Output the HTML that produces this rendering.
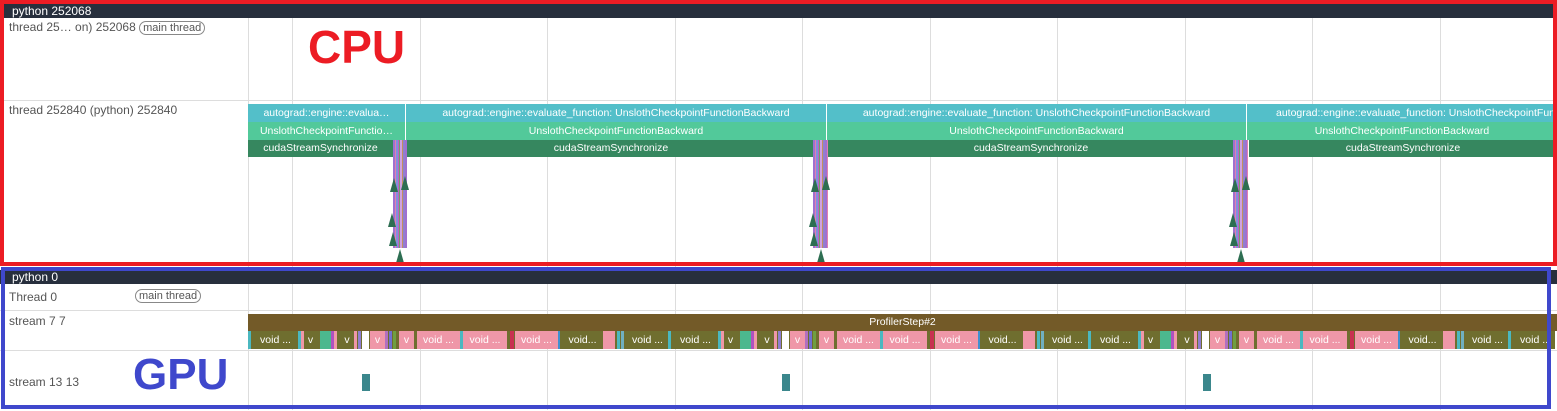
<!DOCTYPE html>
<html><head><meta charset="utf-8"><style>
*{margin:0;padding:0;box-sizing:border-box}
body{width:1557px;height:411px;background:#fff;position:relative;overflow:hidden;font-family:"Liberation Sans",sans-serif}
.a{position:absolute}
.hd{background:#272f3d;color:#fff;font-size:12px;line-height:14px;padding-left:12px}
.lbl{color:#555;font-size:12px}
.pill{border:1px solid #888;border-radius:8px;padding:0 3px;font-size:11px;color:#555}
.vl{position:absolute;width:1px;background:#ddd}
.hl{position:absolute;height:1px;background:#ddd;left:0;width:1557px}
.s{position:absolute;color:#fff;font-size:10.5px;text-align:center;overflow:hidden;white-space:nowrap}
.k{position:absolute;top:0;height:18px;color:#fff;font-size:10.5px;line-height:18px;text-align:center;overflow:hidden;white-space:nowrap}
.kr{position:absolute;left:248px;top:331px;width:1307px;height:18px;background:#6f6e2f;overflow:hidden}
.tri{position:absolute;width:0;height:0;border-left:4px solid transparent;border-right:4px solid transparent;border-bottom:14px solid #2d6e52}
.sp{position:absolute;background:repeating-linear-gradient(90deg,#a070d0 0 2px,#e080b0 2px 3px,#8090e0 3px 5px,#c060c0 5px 6px,#70a070 6px 7px,#d0a0e0 7px 9px,#c09060 9px 10px,#9080d0 10px 12px)}
</style></head><body>
<div class="vl" style="left:248px;top:18px;height:392px"></div>
<div class="vl" style="left:292px;top:18px;height:392px"></div>
<div class="vl" style="left:420px;top:18px;height:392px"></div>
<div class="vl" style="left:547px;top:18px;height:392px"></div>
<div class="vl" style="left:675px;top:18px;height:392px"></div>
<div class="vl" style="left:802px;top:18px;height:392px"></div>
<div class="vl" style="left:930px;top:18px;height:392px"></div>
<div class="vl" style="left:1057px;top:18px;height:392px"></div>
<div class="vl" style="left:1185px;top:18px;height:392px"></div>
<div class="vl" style="left:1312px;top:18px;height:392px"></div>
<div class="vl" style="left:1440px;top:18px;height:392px"></div>
<div class="hl" style="top:100px"></div>
<div class="hl" style="top:310px"></div>
<div class="hl" style="top:350px"></div>

<div class="a hd" style="left:0;top:4px;width:1557px;height:14px">python 252068</div>
<div class="a lbl" style="left:9px;top:20px">thread 25… on) 252068 <span class="pill">main thread</span></div>
<div class="a lbl" style="left:9px;top:103px">thread 252840 (python) 252840</div>
<div class="a" style="left:308px;top:20px;color:#ec1c24;font-size:46px;font-weight:bold">CPU</div>

<div class="s" style="left:248px;top:104px;width:157px;height:18px;line-height:18px;background:#53bfc9">autograd::engine::evalua…</div>
<div class="s" style="left:406px;top:104px;width:420px;height:18px;line-height:18px;background:#53bfc9">autograd::engine::evaluate_function: UnslothCheckpointFunctionBackward</div>
<div class="s" style="left:827px;top:104px;width:419px;height:18px;line-height:18px;background:#53bfc9">autograd::engine::evaluate_function: UnslothCheckpointFunctionBackward</div>
<div class="s" style="left:1247px;top:104px;width:310px;height:18px;line-height:18px;background:#53bfc9;text-align:left;padding-left:29px">autograd::engine::evaluate_function: UnslothCheckpointFunctionBackward</div>
<div class="s" style="left:248px;top:122px;width:157px;height:18px;line-height:18px;background:#52c99a">UnslothCheckpointFunctio…</div>
<div class="s" style="left:406px;top:122px;width:420px;height:18px;line-height:18px;background:#52c99a">UnslothCheckpointFunctionBackward</div>
<div class="s" style="left:827px;top:122px;width:419px;height:18px;line-height:18px;background:#52c99a">UnslothCheckpointFunctionBackward</div>
<div class="s" style="left:1247px;top:122px;width:310px;height:18px;line-height:18px;background:#52c99a">UnslothCheckpointFunctionBackward</div>
<div class="s" style="left:248px;top:140px;width:145px;height:17px;line-height:17px;background:#36875f">cudaStreamSynchronize</div>
<div class="s" style="left:407px;top:140px;width:408px;height:17px;line-height:17px;background:#36875f">cudaStreamSynchronize</div>
<div class="s" style="left:828px;top:140px;width:406px;height:17px;line-height:17px;background:#36875f">cudaStreamSynchronize</div>
<div class="s" style="left:1249px;top:140px;width:308px;height:17px;line-height:17px;background:#36875f">cudaStreamSynchronize</div>

<div class="sp" style="left:393px;top:140px;width:14px;height:108px"></div>
<div class="sp" style="left:813px;top:140px;width:15px;height:108px"></div>
<div class="sp" style="left:1233px;top:140px;width:15px;height:108px"></div>
<div class="tri" style="left:390px;top:178px"></div><div class="tri" style="left:401px;top:176px"></div>
<div class="tri" style="left:388px;top:213px"></div><div class="tri" style="left:389px;top:232px"></div><div class="tri" style="left:396px;top:249px"></div>
<div class="tri" style="left:811px;top:178px"></div><div class="tri" style="left:822px;top:176px"></div>
<div class="tri" style="left:809px;top:213px"></div><div class="tri" style="left:810px;top:232px"></div><div class="tri" style="left:817px;top:249px"></div>
<div class="tri" style="left:1231px;top:178px"></div><div class="tri" style="left:1242px;top:176px"></div>
<div class="tri" style="left:1229px;top:213px"></div><div class="tri" style="left:1230px;top:232px"></div><div class="tri" style="left:1237px;top:249px"></div>

<div class="a hd" style="left:0;top:270px;width:1557px;height:14px">python 0</div>
<div class="a lbl" style="left:9px;top:290px">Thread 0</div>
<div class="a pill" style="left:135px;top:289px">main thread</div>
<div class="a lbl" style="left:9px;top:314px">stream 7 7</div>
<div class="a lbl" style="left:9px;top:375px">stream 13 13</div>
<div class="a" style="left:133px;top:350px;color:#3f48cc;font-size:44px;font-weight:bold">GPU</div>

<div class="s" style="left:248px;top:314px;width:1309px;height:17px;line-height:17px;background:#735a28">ProfilerStep#2</div>
<div class="kr">
<div class="a" style="left:0;top:0;width:1307px;height:18px">
<div class="k" style="left:0;width:3px;background:#4bb8c0"></div><div class="k" style="left:5px;width:45px;background:#6f6e2f">void ...</div><div class="k" style="left:50px;width:3px;background:#4bb8c0"></div><div class="k" style="left:53px;width:3px;background:#ef97a8"></div><div class="k" style="left:56px;width:13px;background:#6f6e2f">v</div><div class="k" style="left:72px;width:11px;background:#4cb88e"></div><div class="k" style="left:83px;width:3px;background:#b050c0"></div><div class="k" style="left:86px;width:3px;background:#ef97a8"></div><div class="k" style="left:92px;width:14px;background:#6f6e2f">v</div><div class="k" style="left:106px;width:3px;background:#ef97a8"></div><div class="k" style="left:110px;width:3px;background:#8f7fd0"></div><div class="k" style="left:114px;width:7px;background:#fff"></div><div class="k" style="left:122px;width:15px;background:#ef97a8">v</div><div class="k" style="left:137px;width:3px;background:#b070c0"></div><div class="k" style="left:141px;width:3px;background:#7070d0"></div><div class="k" style="left:145px;width:3px;background:#6f9f40"></div><div class="k" style="left:151px;width:15px;background:#ef97a8">v</div><div class="k" style="left:169px;width:43px;background:#ef97a8">void ...</div><div class="k" style="left:212px;width:3px;background:#4bb8c0"></div><div class="k" style="left:215px;width:44px;background:#ef97a8">void ...</div><div class="k" style="left:262px;width:4px;background:#c83050"></div><div class="k" style="left:267px;width:43px;background:#ef97a8">void ...</div><div class="k" style="left:310px;width:2px;background:#4090d0"></div><div class="k" style="left:314px;width:41px;background:#6f6e2f">void...</div><div class="k" style="left:355px;width:12px;background:#ef97a8"></div><div class="k" style="left:369px;width:3px;background:#4bb8c0"></div><div class="k" style="left:373px;width:3px;background:#70b0c0"></div><div class="k" style="left:379px;width:41px;background:#6f6e2f">void ...</div>
</div>
<div class="a" style="left:420px;top:0;width:900px;height:18px">
<div class="k" style="left:0;width:3px;background:#4bb8c0"></div><div class="k" style="left:5px;width:45px;background:#6f6e2f">void ...</div><div class="k" style="left:50px;width:3px;background:#4bb8c0"></div><div class="k" style="left:53px;width:3px;background:#ef97a8"></div><div class="k" style="left:56px;width:13px;background:#6f6e2f">v</div><div class="k" style="left:72px;width:11px;background:#4cb88e"></div><div class="k" style="left:83px;width:3px;background:#b050c0"></div><div class="k" style="left:86px;width:3px;background:#ef97a8"></div><div class="k" style="left:92px;width:14px;background:#6f6e2f">v</div><div class="k" style="left:106px;width:3px;background:#ef97a8"></div><div class="k" style="left:110px;width:3px;background:#8f7fd0"></div><div class="k" style="left:114px;width:7px;background:#fff"></div><div class="k" style="left:122px;width:15px;background:#ef97a8">v</div><div class="k" style="left:137px;width:3px;background:#b070c0"></div><div class="k" style="left:141px;width:3px;background:#7070d0"></div><div class="k" style="left:145px;width:3px;background:#6f9f40"></div><div class="k" style="left:151px;width:15px;background:#ef97a8">v</div><div class="k" style="left:169px;width:43px;background:#ef97a8">void ...</div><div class="k" style="left:212px;width:3px;background:#4bb8c0"></div><div class="k" style="left:215px;width:44px;background:#ef97a8">void ...</div><div class="k" style="left:262px;width:4px;background:#c83050"></div><div class="k" style="left:267px;width:43px;background:#ef97a8">void ...</div><div class="k" style="left:310px;width:2px;background:#4090d0"></div><div class="k" style="left:314px;width:41px;background:#6f6e2f">void...</div><div class="k" style="left:355px;width:12px;background:#ef97a8"></div><div class="k" style="left:369px;width:3px;background:#4bb8c0"></div><div class="k" style="left:373px;width:3px;background:#70b0c0"></div><div class="k" style="left:379px;width:41px;background:#6f6e2f">void ...</div>
</div>
<div class="a" style="left:840px;top:0;width:900px;height:18px">
<div class="k" style="left:0;width:3px;background:#4bb8c0"></div><div class="k" style="left:5px;width:45px;background:#6f6e2f">void ...</div><div class="k" style="left:50px;width:3px;background:#4bb8c0"></div><div class="k" style="left:53px;width:3px;background:#ef97a8"></div><div class="k" style="left:56px;width:13px;background:#6f6e2f">v</div><div class="k" style="left:72px;width:11px;background:#4cb88e"></div><div class="k" style="left:83px;width:3px;background:#b050c0"></div><div class="k" style="left:86px;width:3px;background:#ef97a8"></div><div class="k" style="left:92px;width:14px;background:#6f6e2f">v</div><div class="k" style="left:106px;width:3px;background:#ef97a8"></div><div class="k" style="left:110px;width:3px;background:#8f7fd0"></div><div class="k" style="left:114px;width:7px;background:#fff"></div><div class="k" style="left:122px;width:15px;background:#ef97a8">v</div><div class="k" style="left:137px;width:3px;background:#b070c0"></div><div class="k" style="left:141px;width:3px;background:#7070d0"></div><div class="k" style="left:145px;width:3px;background:#6f9f40"></div><div class="k" style="left:151px;width:15px;background:#ef97a8">v</div><div class="k" style="left:169px;width:43px;background:#ef97a8">void ...</div><div class="k" style="left:212px;width:3px;background:#4bb8c0"></div><div class="k" style="left:215px;width:44px;background:#ef97a8">void ...</div><div class="k" style="left:262px;width:4px;background:#c83050"></div><div class="k" style="left:267px;width:43px;background:#ef97a8">void ...</div><div class="k" style="left:310px;width:2px;background:#4090d0"></div><div class="k" style="left:314px;width:41px;background:#6f6e2f">void...</div><div class="k" style="left:355px;width:12px;background:#ef97a8"></div><div class="k" style="left:369px;width:3px;background:#4bb8c0"></div><div class="k" style="left:373px;width:3px;background:#70b0c0"></div><div class="k" style="left:379px;width:41px;background:#6f6e2f">void ...</div>
<div class="k" style="left:420px;width:3px;background:#4bb8c0"></div><div class="k" style="left:425px;width:45px;background:#6f6e2f">void ...</div>
</div>
</div>
<div class="a" style="left:362px;top:374px;width:8px;height:17px;background:#3b878c"></div>
<div class="a" style="left:782px;top:374px;width:8px;height:17px;background:#3b878c"></div>
<div class="a" style="left:1203px;top:374px;width:8px;height:17px;background:#3b878c"></div>

<div class="a" style="left:0;top:0;width:1557px;height:266px;border:4px solid #ec1c24"></div>
<div class="a" style="left:1px;top:267px;width:1550px;height:142px;border:4px solid #3f48cc"></div>
</body></html>
